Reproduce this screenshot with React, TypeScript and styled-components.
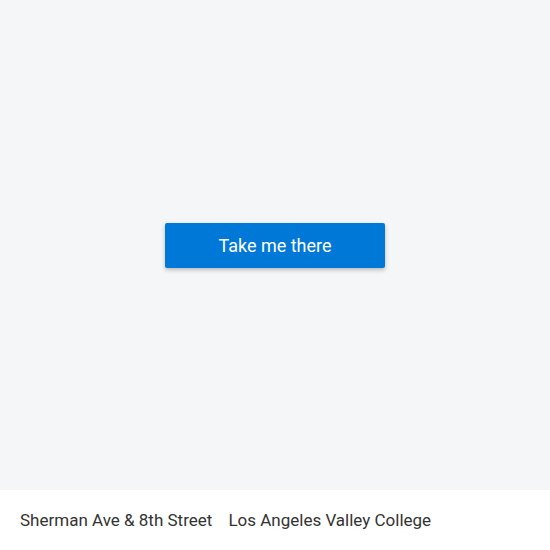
import React from 'react';
import styled, { createGlobalStyle } from 'styled-components';

const GlobalStyle = createGlobalStyle`
    html, body {
        margin: 0;
        padding: 0;
    }
    body {
        font-family: Roboto, "Noto Sans", sans-serif;
        background-color: #f5f6f8;
    }
`;

const Page = styled.div`
    display: flex;
    flex-direction: column;
    width: 550px;
    height: 550px;
`;

const MapArea = styled.div`
    flex: 1;
    display: flex;
    align-items: center;
    justify-content: center;
    background-color: #f5f6f8;
`;

const ActionButton = styled.button`
    width: 220px;
    height: 45px;
    margin-top: 1px;
    border: none;
    border-radius: 2px;
    background-color: #0078d7;
    color: #ffffff;
    font-family: Roboto, sans-serif;
    font-size: 18px;
    cursor: pointer;
    box-shadow: 0 2px 4px rgba(0, 0, 0, 0.25);
`;

const Footer = styled.div`
    display: flex;
    align-items: center;
    gap: 16px;
    height: 60px;
    padding: 0 20px;
    background-color: #ffffff;
    color: #333333;
    font-size: 17px;
`;

const Stop = styled.span`
    white-space: nowrap;
`;

const App = () => {
    return (
        <>
            <GlobalStyle />
            <Page>
                <MapArea>
                    <ActionButton>Take me there</ActionButton>
                </MapArea>
                <Footer>
                    <Stop>Sherman Ave &amp; 8th Street</Stop>
                    <Stop>Los Angeles Valley College</Stop>
                </Footer>
            </Page>
        </>
    );
};

export default App;
